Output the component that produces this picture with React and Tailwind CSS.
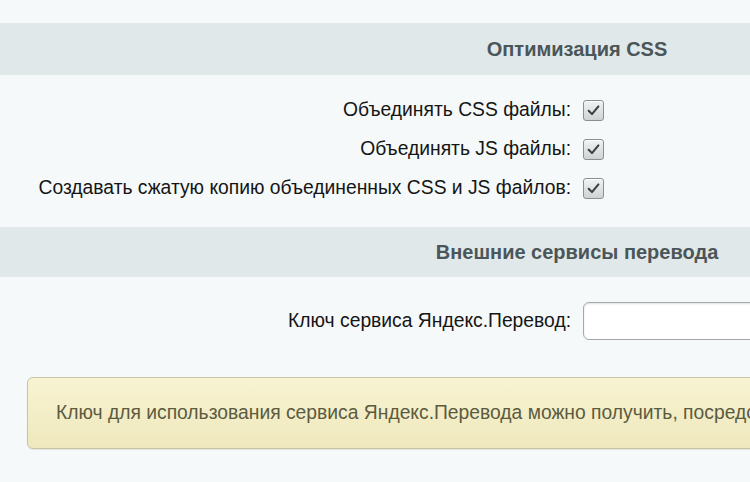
import React from "react";

const font = { fontFamily: '"Liberation Sans", Arial, sans-serif' };

function Check() {
  return (
    <span className="inline-flex h-[21px] w-[21px] items-center justify-center rounded-[3px] border border-[#8a8f8f] bg-gradient-to-b from-[#f2f3f3] to-[#cfd3d3] shadow-[inset_0_1px_0_#ffffff]">
      <svg width="15" height="15" viewBox="0 0 14 14" fill="none">
        <path d="M2.5 7.2 L5.6 10.4 L11.6 3.2" stroke="#3a3f3f" strokeWidth="1.9" strokeLinecap="round" strokeLinejoin="round" />
      </svg>
    </span>
  );
}

function Header({ children, h }) {
  return (
    <div className={`flex ${h} items-center justify-center bg-[#e1e8ea] text-[20px] font-bold text-[#4b5658]`}>
      {children}
    </div>
  );
}

function Row({ label, children, h = "h-[39px]" }) {
  return (
    <div className={`grid ${h} grid-cols-2 items-center`}>
      <div className="pr-[6px] text-right text-[19.3px] text-[#151515]">{label}</div>
      <div className="flex items-center pl-[6px]">{children}</div>
    </div>
  );
}

export default function App() {
  return (
    <div className="h-[482px] w-[750px] overflow-hidden bg-[#f5f9f9]" style={font}>
      <div className="w-[1154px]">
        <div className="h-[23px]" />
        <Header h="h-[52px]">Оптимизация CSS</Header>
        <div className="pb-[19px] pt-[16px]">
          <Row label="Объединять CSS файлы:">
            <Check />
          </Row>
          <Row label="Объединять JS файлы:">
            <Check />
          </Row>
          <Row label="Создавать сжатую копию объединенных CSS и JS файлов:">
            <Check />
          </Row>
        </div>
        <Header h="h-[50px]">Внешние сервисы перевода</Header>
        <div className="pt-[25px]">
          <Row label="Ключ сервиса Яндекс.Перевод:" h="h-[38px]">
            <input
              type="text"
              className="h-[38px] w-[300px] rounded-[6px] border border-[#a3a9a9] bg-white shadow-[inset_0_1px_2px_rgba(0,0,0,0.12)] outline-none"
            />
          </Row>
        </div>
        <div className="px-[27px] pt-[37px]">
          <div className="flex h-[72px] items-center whitespace-nowrap rounded-[6px] border border-[#c9c4a0] bg-gradient-to-b from-[#f8f3d2] to-[#efe8bd] pl-[28px] text-[19.3px] text-[#5b5b3f] shadow-[0_1px_1px_rgba(0,0,0,0.08)]">
            Ключ для использования сервиса Яндекс.Перевода можно получить, посредством регистрации на сайте сервиса.
          </div>
        </div>
      </div>
    </div>
  );
}
